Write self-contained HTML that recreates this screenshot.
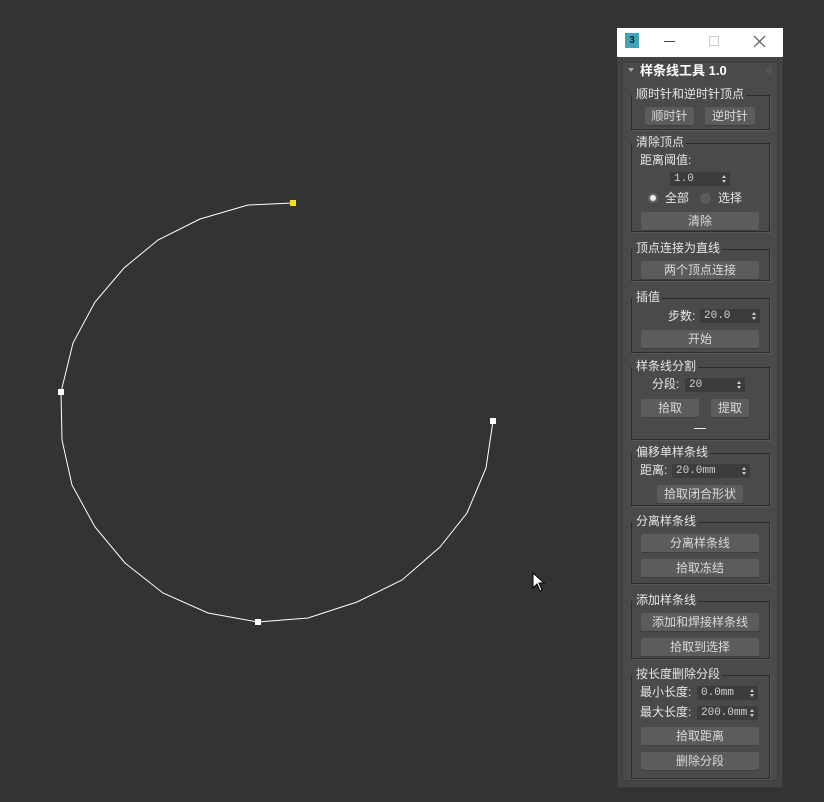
<!DOCTYPE html>
<html><head><meta charset="utf-8"><style>
*{margin:0;padding:0;box-sizing:border-box}
body{width:824px;height:802px;background:#333333;position:relative;overflow:hidden;font-family:"Liberation Sans","Noto Sans CJK SC",sans-serif;font-size:12px;color:#dcdcdc}
.a{position:absolute}
.win{left:617px;top:28px;width:166px;height:760px;background:#444444;border:1px solid #3a3a3a}
.tb{left:617px;top:28px;width:166px;height:29px;background:#ffffff}
.roll{left:622px;top:62px;width:156px;height:719px;background:#4a4a4a;border:1px solid #3c3c3c}
.grp{position:absolute;left:631px;width:139px;border:1px solid #2c2c2c;box-shadow:1px 1px 0 #575757}
.t{position:absolute;background:#4a4a4a;padding:0 2px 0 4px;line-height:14px;color:#e6e6e6;font-size:12px}
.btn{position:absolute;background:#5c5c5c;border-radius:2px;height:18px;line-height:18px;text-align:center;color:#dadada;font-size:12px;box-shadow:0 1px 0 #3e3e3e}
.sp{position:absolute;background:#3c3c3c;height:14px;line-height:14px;font-family:"Liberation Mono","Noto Sans CJK SC",monospace;font-size:11px;color:#d0d0d0;padding-left:4px}
.sp:after{content:"";position:absolute;right:4px;top:3px;border-left:2px solid transparent;border-right:2px solid transparent;border-bottom:3px solid #ccc}
.sp:before{content:"";position:absolute;right:4px;top:8px;border-left:2px solid transparent;border-right:2px solid transparent;border-top:3px solid #ccc}
.l{position:absolute;line-height:14px;color:#e6e6e6}
</style></head><body>
<svg class="a" style="left:0;top:0" width="600" height="802">
<polyline fill="none" stroke="#ffffff" stroke-width="1" points="293,203 248,205 200,219 158,240 124,268 95,302 73,343 61,392 62,440 72,485 95,527 125,563 163,593 208,613 258,622 308,618 357,602 402,580 440,547 467,513 486,468 493,421"/>
<rect x="290" y="200" width="6" height="6" fill="#f0e020"/>
<rect x="58" y="389" width="6" height="6" fill="#fff"/>
<rect x="255" y="619" width="6" height="6" fill="#fff"/>
<rect x="490" y="418" width="6" height="6" fill="#fff"/>
<path d="M533,573 L533,588 L537,584 L540,591 L542,590 L539,583 L544,583 Z" fill="#fff" stroke="#000" stroke-width="1"/>
</svg>
<div class="a win"></div>
<div class="a tb"></div>
<div class="a" style="left:625px;top:33px;width:14px;height:15px;background:#3fa6b8;color:#123;font-size:10px;font-weight:bold;text-align:center;line-height:15px">3</div>
<div class="a" style="left:664px;top:41px;width:11px;height:1px;background:#444"></div>
<div class="a" style="left:709px;top:36px;width:10px;height:10px;border:1px solid #ccc"></div>
<svg class="a" style="left:753px;top:35px" width="13" height="13"><path d="M1,1 L12,12 M12,1 L1,12" stroke="#555" stroke-width="1.2"/></svg>
<div class="a roll"></div>
<div class="a" style="left:628px;top:68px;border-left:3px solid transparent;border-right:3px solid transparent;border-top:4px solid #aaa"></div>
<div class="a" style="left:640px;top:63px;font-weight:bold;font-size:13px;color:#fff;line-height:16px">样条线工具 1.0</div>
<div class="a" style="left:766px;top:67px;width:6px;height:6px;background:radial-gradient(#777 35%,transparent 40%) 0 0/2px 2px"></div>

<div class="grp" style="top:95px;height:35px"></div><div class="t" style="left:632px;top:87px">顺时针和逆时针顶点</div>
<div class="btn" style="left:645px;top:107px;width:49px">顺时针</div>
<div class="btn" style="left:705px;top:107px;width:50px">逆时针</div>

<div class="grp" style="top:143px;height:89px"></div><div class="t" style="left:632px;top:135px">清除顶点</div>
<div class="l" style="left:640px;top:153px">距离阈值:</div>
<div class="sp" style="left:670px;top:172px;width:60px">1.0</div>
<div class="a" style="left:648px;top:193px;width:10px;height:10px;border-radius:50%;background:#eee;border:2px solid #666"></div>
<div class="l" style="left:665px;top:191px">全部</div>
<div class="a" style="left:700px;top:193px;width:11px;height:11px;border-radius:50%;background:#5a5a5a"></div>
<div class="l" style="left:718px;top:191px">选择</div>
<div class="btn" style="left:641px;top:212px;width:118px">清除</div>

<div class="grp" style="top:249px;height:32px"></div><div class="t" style="left:632px;top:241px">顶点连接为直线</div>
<div class="btn" style="left:641px;top:261px;width:118px">两个顶点连接</div>

<div class="grp" style="top:298px;height:55px"></div><div class="t" style="left:632px;top:290px">插值</div>
<div class="l" style="left:668px;top:309px">步数:</div>
<div class="sp" style="left:700px;top:309px;width:60px">20.0</div>
<div class="btn" style="left:641px;top:330px;width:118px">开始</div>

<div class="grp" style="top:367px;height:73px"></div><div class="t" style="left:632px;top:359px">样条线分割</div>
<div class="l" style="left:652px;top:377px">分段:</div>
<div class="sp" style="left:685px;top:378px;width:60px">20</div>
<div class="btn" style="left:641px;top:399px;width:58px">拾取</div>
<div class="btn" style="left:711px;top:399px;width:38px">提取</div>
<div class="a" style="left:694px;top:428px;width:12px;height:1px;background:#eee"></div>

<div class="grp" style="top:453px;height:53px"></div><div class="t" style="left:632px;top:445px">偏移单样条线</div>
<div class="l" style="left:640px;top:463px">距离:</div>
<div class="sp" style="left:672px;top:464px;width:78px">20.0mm</div>
<div class="btn" style="left:657px;top:485px;width:86px">拾取闭合形状</div>

<div class="grp" style="top:522px;height:62px"></div><div class="t" style="left:632px;top:514px">分离样条线</div>
<div class="btn" style="left:641px;top:534px;width:118px">分离样条线</div>
<div class="btn" style="left:641px;top:559px;width:118px">拾取冻结</div>

<div class="grp" style="top:601px;height:58px"></div><div class="t" style="left:632px;top:593px">添加样条线</div>
<div class="btn" style="left:641px;top:613px;width:118px">添加和焊接样条线</div>
<div class="btn" style="left:641px;top:638px;width:118px">拾取到选择</div>

<div class="grp" style="top:675px;height:104px"></div><div class="t" style="left:632px;top:667px">按长度删除分段</div>
<div class="l" style="left:640px;top:685px">最小长度:</div>
<div class="sp" style="left:697px;top:686px;width:61px">0.0mm</div>
<div class="l" style="left:640px;top:705px">最大长度:</div>
<div class="sp" style="left:697px;top:706px;width:61px">200.0mm</div>
<div class="btn" style="left:641px;top:727px;width:118px">拾取距离</div>
<div class="btn" style="left:641px;top:752px;width:118px">删除分段</div>
</body></html>
